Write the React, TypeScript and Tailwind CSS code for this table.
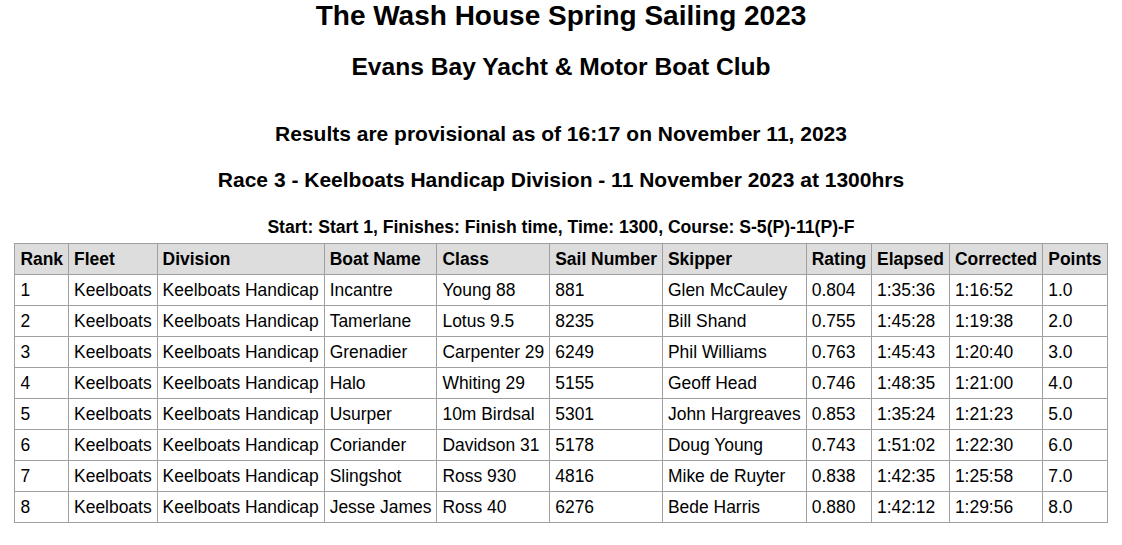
const headers = [
  'Rank',
  'Fleet',
  'Division',
  'Boat Name',
  'Class',
  'Sail Number',
  'Skipper',
  'Rating',
  'Elapsed',
  'Corrected',
  'Points',
];

const rows = [
  ['1', 'Keelboats', 'Keelboats Handicap', 'Incantre', 'Young 88', '881', 'Glen McCauley', '0.804', '1:35:36', '1:16:52', '1.0'],
  ['2', 'Keelboats', 'Keelboats Handicap', 'Tamerlane', 'Lotus 9.5', '8235', 'Bill Shand', '0.755', '1:45:28', '1:19:38', '2.0'],
  ['3', 'Keelboats', 'Keelboats Handicap', 'Grenadier', 'Carpenter 29', '6249', 'Phil Williams', '0.763', '1:45:43', '1:20:40', '3.0'],
  ['4', 'Keelboats', 'Keelboats Handicap', 'Halo', 'Whiting 29', '5155', 'Geoff Head', '0.746', '1:48:35', '1:21:00', '4.0'],
  ['5', 'Keelboats', 'Keelboats Handicap', 'Usurper', '10m Birdsal', '5301', 'John Hargreaves', '0.853', '1:35:24', '1:21:23', '5.0'],
  ['6', 'Keelboats', 'Keelboats Handicap', 'Coriander', 'Davidson 31', '5178', 'Doug Young', '0.743', '1:51:02', '1:22:30', '6.0'],
  ['7', 'Keelboats', 'Keelboats Handicap', 'Slingshot', 'Ross 930', '4816', 'Mike de Ruyter', '0.838', '1:42:35', '1:25:58', '7.0'],
  ['8', 'Keelboats', 'Keelboats Handicap', 'Jesse James', 'Ross 40', '6276', 'Bede Harris', '0.880', '1:42:12', '1:29:56', '8.0'],
];

function App() {
  return (
    <div className="min-h-screen bg-white text-black font-['Liberation_Sans',Arial,sans-serif] text-[17.6px]">
      <h1 className="text-center text-[28px] leading-[32px] font-bold">The Wash House Spring Sailing 2023</h1>
      <h2 className="mt-[21px] text-center text-[24.6px] leading-[28px] font-bold">Evans Bay Yacht &amp; Motor Boat Club</h2>

      <h3 className="mt-[41px] text-center text-[21px] leading-[24px] font-bold">
        Results are provisional as of 16:17 on November 11, 2023
      </h3>
      <h3 className="mt-[22px] text-center text-[21px] leading-[24px] font-bold">
        Race 3 - Keelboats Handicap Division - 11 November 2023 at 1300hrs
      </h3>

      <p className="mt-[25px] text-center leading-[20px] font-bold">
        Start: Start 1, Finishes: Finish time, Time: 1300, Course: S-5(P)-11(P)-F
      </p>

      {/* Results table */}
      <table className="mx-auto mt-[6px] border-collapse border border-[#a0a0a0] text-[17.45px]">
        <thead>
          <tr className="bg-[#dddddd]">
            {headers.map((h) => (
              <th key={h} className="border border-[#a0a0a0] px-[5px] py-[4.5px] text-left font-bold leading-[21px] whitespace-nowrap">
                {h}
              </th>
            ))}
          </tr>
        </thead>
        <tbody>
          {rows.map((r) => (
            <tr key={r[0]}>
              {r.map((c, i) => (
                <td key={i} className="border border-[#a0a0a0] px-[5px] py-[4.5px] leading-[21px] whitespace-nowrap">
                  {c}
                </td>
              ))}
            </tr>
          ))}
        </tbody>
      </table>
    </div>
  );
}

export default App;
